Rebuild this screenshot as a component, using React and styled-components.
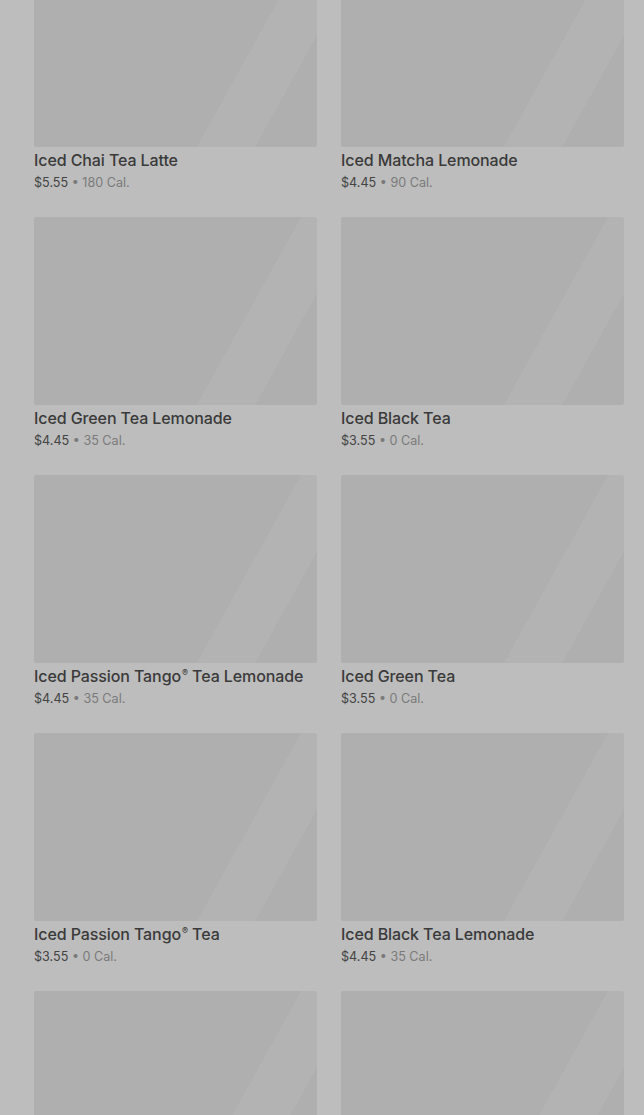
import React from 'react';
import styled, { createGlobalStyle } from 'styled-components';

const GlobalStyle = createGlobalStyle`
	html, body {
		margin: 0;
		padding: 0;
		background: #bdbdbd;
		overflow: hidden;
		font-family: Inter, Roboto, 'Liberation Sans', sans-serif;
	}
`;

const Grid = styled.div`
	display: grid;
	grid-template-columns: 283px 283px;
	column-gap: 24px;
	row-gap: 24px;
	padding: 0 20px 0 34px;
	margin-top: -41px;
`;

const Card = styled.div`
	display: flex;
	flex-direction: column;
`;

const Thumb = styled.div`
	height: 188px;
	border-radius: 2px;
	background: linear-gradient(
		119deg,
		#afafaf 0%,
		#afafaf 69%,
		#b3b3b3 69%,
		#b3b3b3 84%,
		#afafaf 84%,
		#afafaf 100%
	);
`;

const Title = styled.div`
	margin-top: 3px;
	font-size: 16px;
	line-height: 20px;
	font-weight: 500;
	letter-spacing: -0.1px;
	color: #3a3a3a;
`;

const Reg = styled.sup`
	font-size: 9px;
	line-height: 0;
	vertical-align: 6px;
	margin-left: 1px;
`;

const Meta = styled.div`
	margin-top: 3px;
	font-size: 12.6px;
	line-height: 20px;
	color: #7a7a7a;
`;

const Price = styled.span`
	color: #434343;
`;

const drinks = [
	{ name: 'Iced Chai Tea Latte', price: '$5.55', cal: '180 Cal.' },
	{ name: 'Iced Matcha Lemonade', price: '$4.45', cal: '90 Cal.' },
	{ name: 'Iced Green Tea Lemonade', price: '$4.45', cal: '35 Cal.' },
	{ name: 'Iced Black Tea', price: '$3.55', cal: '0 Cal.' },
	{ name: 'Iced Passion Tango', suffix: ' Tea Lemonade', price: '$4.45', cal: '35 Cal.' },
	{ name: 'Iced Green Tea', price: '$3.55', cal: '0 Cal.' },
	{ name: 'Iced Passion Tango', suffix: ' Tea', price: '$3.55', cal: '0 Cal.' },
	{ name: 'Iced Black Tea Lemonade', price: '$4.45', cal: '35 Cal.' },
	{ id: 'more-1' },
	{ id: 'more-2' },
];

const DrinkCard = ({ drink }) => (
	<Card>
		<Thumb />
		{drink.name && (
			<>
				<Title>
					{drink.name}
					{drink.suffix && (
						<>
							<Reg>®</Reg>
							{drink.suffix}
						</>
					)}
				</Title>
				<Meta>
					<Price>{drink.price}</Price> • {drink.cal}
				</Meta>
			</>
		)}
	</Card>
);

export default function App() {
	return (
		<>
			<GlobalStyle />
			<Grid>
				{drinks.map((d, i) => (
					<DrinkCard key={d.id || i} drink={d} />
				))}
			</Grid>
		</>
	);
}
